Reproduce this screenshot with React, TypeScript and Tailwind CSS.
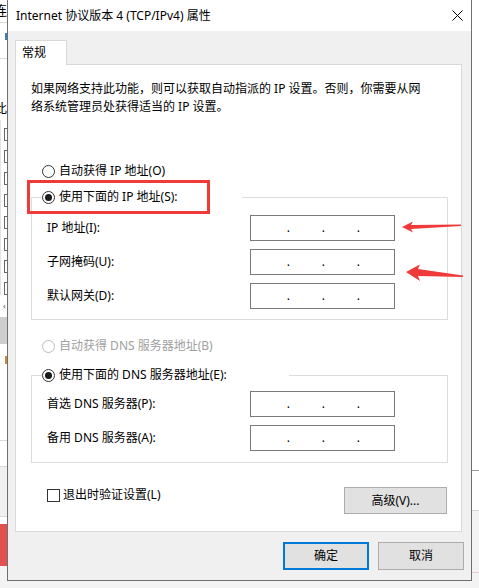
import type { ReactNode } from "react";

const fieldRows = {
  ip: ["IP 地址(I):", "子网掩码(U):", "默认网关(D):"],
  dns: ["首选 DNS 服务器(P):", "备用 DNS 服务器(A):"],
};

function Radio({
  checked = false,
  disabled = false,
  children,
}: {
  checked?: boolean;
  disabled?: boolean;
  children: ReactNode;
}) {
  return (
    <div className="flex h-[20px] items-center gap-[4px]">
      <span
        className={`flex h-[13px] w-[13px] shrink-0 items-center justify-center rounded-full border bg-white ${
          disabled ? "border-[#bcbcbc]" : "border-[#333333]"
        }`}
      >
        {checked && <span className="h-[7px] w-[7px] rounded-full bg-[#1b1b1b]" />}
      </span>
      <span className={disabled ? "text-[#a0a0a0]" : "text-black"}>{children}</span>
    </div>
  );
}

function IpBox() {
  return (
    <div className="flex h-[26px] w-[145px] items-center border border-[#7a7a7a] bg-white pl-[4px]">
      {[0, 1, 2].map((i) => (
        <span key={i} className="w-[35px] text-right leading-none">
          .
        </span>
      ))}
    </div>
  );
}

function AddressGroup({
  label,
  legendWidth,
  rows,
  pt,
  pb,
}: {
  label: string;
  legendWidth: string;
  rows: string[];
  pt: string;
  pb: string;
}) {
  return (
    <fieldset className="m-0 border border-[#dcdcdc] p-0">
      <legend className={`ml-[10px] bg-white p-0 ${legendWidth}`}>
        <Radio checked>{label}</Radio>
      </legend>
      <div className={`flex flex-col gap-[8px] pl-[15px] ${pt} ${pb}`}>
        {rows.map((r) => (
          <div key={r} className="grid grid-cols-[203px_145px] items-center">
            <span className="leading-[20px]">{r}</span>
            <IpBox />
          </div>
        ))}
      </div>
    </fieldset>
  );
}

function Button({ children, focused = false }: { children: ReactNode; focused?: boolean }) {
  return (
    <div
      className={`flex h-[28px] w-[86px] items-center justify-center bg-[#e1e1e1] ${
        focused ? "border-2 border-[#0078d7]" : "border border-[#adadad]"
      }`}
    >
      {children}
    </div>
  );
}

// strip of the window sitting behind the dialog, left side
function BackLeft() {
  return (
    <div className="flex w-[7px] shrink-0 flex-col overflow-hidden bg-white">
      <div className="h-[22px] overflow-hidden pt-[1px] leading-[18px]">
        <span className="-ml-[6px] block text-[13px]">连</span>
      </div>
      <div className="h-px bg-[#d9d9d9]" />
      <div className="h-[35px] pt-[10px] pl-[5px]">
        <div className="h-[7px] w-[2px] bg-[#3c7fb1]" />
      </div>
      <div className="h-px bg-[#d9d9d9]" />
      <div className="h-[61px] overflow-hidden pt-[40px] leading-[18px]">
        <span className="-ml-[6px] block text-[13px]">此</span>
      </div>
      <div className="flex flex-col gap-[9px] border-l border-[#e3e3e3] pt-[8px]">
        {[0, 1, 2, 3, 4, 5, 6, 7].map((i) => (
          <div key={i} className="ml-[3px] h-[13px] w-[4px] border-y border-l border-[#666666]" />
        ))}
      </div>
      <div className="mt-[6px] h-[10px] pl-[3px] text-[9px] leading-[10px] text-[#555555]">‹</div>
      <div className="mt-[6px] h-[27px] bg-[#cdcdcd]" />
      <div className="h-[96px] pt-[12px] pl-[5px]">
        <div className="h-[8px] w-[2px] bg-[#c98a2c]" />
      </div>
      <div className="h-px bg-[#d9d9d9]" />
      <div className="h-[25px]" />
      <div className="h-px bg-[#d9d9d9]" />
      <div className="h-[49px] bg-[#f0f0f0]" />
      <div className="h-px bg-[#d9d9d9]" />
      <div className="h-[7px]" />
      <div className="h-[42px] bg-[#e0504f]" />
      <div className="flex-1 bg-[#f3f3f3]" />
    </div>
  );
}

function BackRight() {
  return (
    <div className="flex w-[8px] shrink-0 flex-col bg-white">
      <div className="h-[470px]" />
      <div className="h-px bg-[#9a9a9a]" />
      <div className="h-[39px]" />
      <div className="h-px bg-[#d6d6d6]" />
      <div className="h-[61px] bg-[#f3f3f3]" />
      <div className="h-px bg-[#f3c9cf]" />
      <div className="flex-1 bg-[#f3f3f3]" />
    </div>
  );
}

export default function App() {
  return (
    <div className="relative flex h-[588px] w-[479px] overflow-hidden bg-white font-['Noto_Sans','Noto_Sans_CJK_SC',sans-serif] text-[12px] text-black">
      <BackLeft />
      <div className="flex flex-1 flex-col justify-end">
        <div className="h-[7px] bg-[#f3f3f3]" />
      </div>
      <BackRight />

      {/* dialog window */}
      <div className="absolute top-0 left-[7px] flex w-[465px] flex-col border-x border-b border-[#6f6f6f] bg-[#f0f0f0]">
        <div className="flex h-[31px] items-center justify-between bg-white pr-[8px] pl-[8px]">
          <span className="leading-[16px]">Internet 协议版本 4 (TCP/IPv4) 属性</span>
          <svg width="11" height="11" viewBox="0 0 11 11">
            <path d="M0.5 0.5L10.5 10.5M10.5 0.5L0.5 10.5" stroke="#000" strokeWidth="1" fill="none" />
          </svg>
        </div>

        <div className="flex flex-col pt-[9px] pr-[7px] pb-[10px]">
          <div className="ml-[7px] flex">
            <div className="relative z-10 -mb-px flex h-[25px] w-[52px] items-center border-x border-t border-[#d9d9d9] bg-white pl-[6px]">
              常规
            </div>
          </div>

          <div className="mr-[2px] ml-[7px] flex flex-col border border-[#d9d9d9] bg-white pt-[15px] pr-[13px] pb-[17px] pl-[15px]">
            <p className="leading-[18px]">
              如果网络支持此功能，则可以获取自动指派的 IP 设置。否则，你需要从网
              <br />
              络系统管理员处获得适当的 IP 设置。
            </p>

            <div className="mt-[45px] ml-[11px]">
              <Radio>自动获得 IP 地址(O)</Radio>
            </div>

            <div className="mt-[6px]">
              <AddressGroup
                label="使用下面的 IP 地址(S):"
                legendWidth="w-[200px]"
                rows={fieldRows.ip}
                pt="pt-[8px]"
                pb="pb-[10px]"
              />
            </div>

            <div className="mt-[16px] ml-[11px]">
              <Radio disabled>自动获得 DNS 服务器地址(B)</Radio>
            </div>

            <div className="mt-[9px]">
              <AddressGroup
                label="使用下面的 DNS 服务器地址(E):"
                legendWidth="w-[247px]"
                rows={fieldRows.dns}
                pt="pt-[6px]"
                pb="pb-[11px]"
              />
            </div>

            <div className="mt-[24px] flex items-start justify-between">
              <div className="mt-[1px] ml-[16px] flex h-[14px] items-center gap-[3px]">
                <span className="h-[13px] w-[13px] border border-[#333333] bg-white" />
                <span className="leading-[14px]">退出时验证设置(L)</span>
              </div>
              <div className="mr-px flex h-[27px] w-[103px] items-center justify-center border border-[#adadad] bg-[#e1e1e1]">
                高级(V)...
              </div>
            </div>
          </div>

          <div className="mt-[10px] flex justify-end gap-[9px]">
            <Button focused>确定</Button>
            <Button>取消</Button>
          </div>
        </div>
      </div>

      {/* red markup drawn over the dialog */}
      <svg
        className="pointer-events-none absolute inset-0"
        width="479"
        height="588"
        viewBox="0 0 479 588"
      >
        <rect x="28.5" y="181.5" width="180" height="31" fill="none" stroke="#f03a3a" strokeWidth="3" />
        <polygon
          points="402,227 413,221.5 411,225 461,224.5 461,226 411,229 413,232.5"
          fill="#f03a3a"
        />
        <polygon
          points="406,272 420,264.5 418,269 463,275.5 463,277 418,276 420,281"
          fill="#f03a3a"
        />
      </svg>
    </div>
  );
}
